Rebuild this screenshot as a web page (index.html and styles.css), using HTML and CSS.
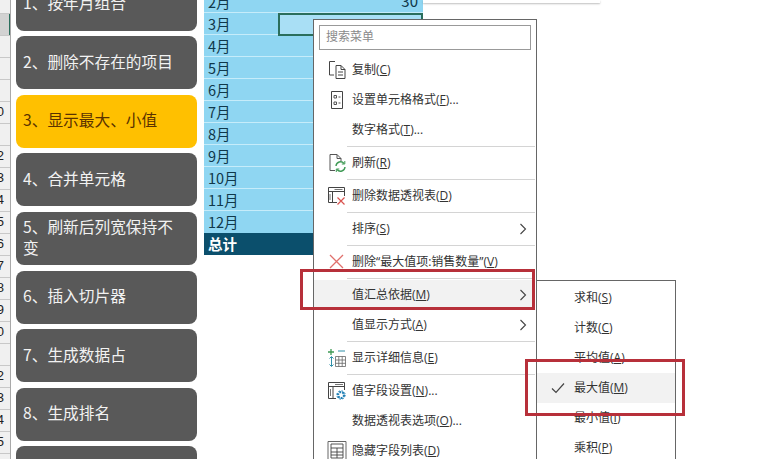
FILE: index.html
```html
<!DOCTYPE html>
<html lang="zh-CN">
<head>
<meta charset="utf-8">
<title>数据透视表</title>
<link rel="stylesheet" href="styles.css">
</head>
<body>
<div class="sheet">
  <div class="rownums">
    <div class="rn"></div>
    <div class="rn rn-selected"></div>
    <div class="rn"></div><div class="rn"></div><div class="rn"></div>
    <div class="rn">0</div><div class="rn"></div><div class="rn">2</div><div class="rn">3</div><div class="rn">4</div><div class="rn">5</div><div class="rn">6</div><div class="rn">7</div><div class="rn">8</div><div class="rn">9</div><div class="rn">0</div><div class="rn"></div><div class="rn">2</div><div class="rn">3</div><div class="rn">4</div><div class="rn">5</div>
  </div>
  <div class="buttons">
    <div class="btn">1、按年月组合</div>
    <div class="btn">2、删除不存在的项目</div>
    <div class="btn btn-active">3、显示最大、小值</div>
    <div class="btn">4、合并单元格</div>
    <div class="btn">5、刷新后列宽保持不变</div>
    <div class="btn">6、插入切片器</div>
    <div class="btn">7、生成数据占</div>
    <div class="btn">8、生成排名</div>
    <div class="btn"></div>
  </div>
  <div class="pivot">
    <div class="pv-row"><span>2月</span><span class="pv-val">30</span></div>
    <div class="pv-row pv-sel-row"><span>3月</span><span class="pv-cell"></span></div>
    <div class="pv-row"><span>4月</span></div>
    <div class="pv-row"><span>5月</span></div>
    <div class="pv-row"><span>6月</span></div>
    <div class="pv-row"><span>7月</span></div>
    <div class="pv-row"><span>8月</span></div>
    <div class="pv-row"><span>9月</span></div>
    <div class="pv-row"><span>10月</span></div>
    <div class="pv-row"><span>11月</span></div>
    <div class="pv-row"><span>12月</span></div>
    <div class="pv-row pv-total"><span>总计</span></div>
  </div>
</div>

<div class="top-panel"></div>

<div class="menu">
  <div class="search">搜索菜单</div>
  <div class="item">
    <svg class="ic" viewBox="0 0 20 20"><path d="M7 15H2.500V1.500H8M9 18.500V5.500h5l4 4v9zM14 5.500v4h4M11 12h5M11 15h5" fill="none" stroke="#444" stroke-width="1"/></svg>
    <span>复制(<u>C</u>)</span>
  </div>
  <div class="item">
    <svg class="ic" viewBox="0 0 20 20"><path d="M4.500 1.500h11v17h-11z" fill="none" stroke="#444"/><path d="M7 5.500h2.500v2.500H7zM7 12h2.500v2.500H7z" fill="none" stroke="#555"/><path d="M11.500 7h2M11.500 13h2" stroke="#555"/></svg>
    <span>设置单元格格式(<u>F</u>)...</span>
  </div>
  <div class="item"><span class="noic">数字格式(<u>T</u>)...</span></div>
  <div class="sep"></div>
  <div class="item">
    <svg class="ic" viewBox="0 0 20 20"><path d="M8 17.500H3V1.500h7l4 4v3M10 1.500v4h4" fill="none" stroke="#555"/><path d="M9 13a4.500 4.500 0 0 1 8-2.500M18 14a4.500 4.500 0 0 1-8 2.500" fill="none" stroke="#3f9a55" stroke-width="1.400"/><path d="M17.800 8v3h-3M9.300 19v-3h3" fill="none" stroke="#3f9a55"/></svg>
    <span>刷新(<u>R</u>)</span>
  </div>
  <div class="sep"></div>
  <div class="item">
    <svg class="ic" viewBox="0 0 20 20"><path d="M10 16.500H1.500v-15h16V10M1.500 5.500h16M5.500 5.500V16.500" fill="none" stroke="#444"/><path d="M7.500 3.500h8M3 8v6" stroke="#777"/><path d="M10.500 11.500l7 7M17.500 11.500l-7 7" stroke="#d9534f" stroke-width="1.200"/></svg>
    <span>删除数据透视表(<u>D</u>)</span>
  </div>
  <div class="sep"></div>
  <div class="item">
    <span class="noic">排序(<u>S</u>)</span>
    <svg class="chev" viewBox="0 0 8 12"><path d="M1.500 1l5 5-5 5" fill="none" stroke="#444" stroke-width="1.100"/></svg>
  </div>
  <div class="sep"></div>
  <div class="item">
    <svg class="ic" viewBox="0 0 20 20"><path d="M3 3l13 13M16 3L3 16" stroke="#e0706c" stroke-width="1.300"/></svg>
    <span>删除“最大值项:销售数量”(<u>V</u>)</span>
  </div>
  <div class="sep"></div>
  <div class="item item-hover">
    <span class="noic">值汇总依据(<u>M</u>)</span>
    <svg class="chev" viewBox="0 0 8 12"><path d="M1.500 1l5 5-5 5" fill="none" stroke="#444" stroke-width="1.100"/></svg>
  </div>
  <div class="item">
    <span class="noic">值显示方式(<u>A</u>)</span>
    <svg class="chev" viewBox="0 0 8 12"><path d="M1.500 1l5 5-5 5" fill="none" stroke="#444" stroke-width="1.100"/></svg>
  </div>
  <div class="sep"></div>
  <div class="item">
    <svg class="ic" viewBox="0 0 20 20"><path d="M1 4h6M4 1v6" stroke="#3f9a55" stroke-width="1.300"/><path d="M11 3h7M4.500 9v9M2.500 16.500l2 2 2-2M2.500 10.500l2-2 2 2" fill="none" stroke="#2f8fa8"/><path d="M8.500 8.500h10v10h-10zM8.500 12h10M8.500 15.300h10M11.800 8.500v10M15.200 8.500v10" fill="none" stroke="#666" stroke-width=".8"/></svg>
    <span>显示详细信息(<u>E</u>)</span>
  </div>
  <div class="sep"></div>
  <div class="item">
    <svg class="ic" viewBox="0 0 20 20"><path d="M9 17.500H1.500v-16h16V9M1.500 5.500h16M6 5.500v12" fill="none" stroke="#444"/><path d="M8 3.500h8M3.500 8v7" stroke="#777"/><circle cx="14" cy="14" r="3" fill="none" stroke="#1f7fb5" stroke-width="2.200" stroke-dasharray="2 1"/><circle cx="14" cy="14" r="4.200" fill="none" stroke="#1f7fb5" stroke-width="1" stroke-dasharray="1.600 1.700"/></svg>
    <span>值字段设置(<u>N</u>)...</span>
  </div>
  <div class="item"><span class="noic">数据透视表选项(<u>O</u>)...</span></div>
  <div class="item">
    <svg class="ic ic-wide" viewBox="0 0 20 20"><path d="M1 .5h18v19H1z" fill="none" stroke="#666"/><path d="M4 3h12v14H4zM4 7h12M4 11h12M4 14h12M10 7v10" fill="none" stroke="#444" stroke-width=".9"/></svg>
    <span>隐藏字段列表(<u>D</u>)</span>
  </div>
</div>

<div class="submenu">
  <div class="item sub-item"><span>求和(<u>S</u>)</span></div>
  <div class="item sub-item"><span>计数(<u>C</u>)</span></div>
  <div class="item sub-item"><span>平均值(<u>A</u>)</span></div>
  <div class="item sub-item item-hover">
    <svg class="check" viewBox="0 0 14 12"><path d="M1 6.500l4 4 8-9" fill="none" stroke="#444" stroke-width="1.200"/></svg>
    <span>最大值(<u>M</u>)</span>
  </div>
  <div class="item sub-item"><span>最小值(<u>I</u>)</span></div>
  <div class="item sub-item"><span>乘积(<u>P</u>)</span></div>
</div>

<div class="mark mark-menu"></div>
<div class="mark mark-sub"></div>
</body>
</html>
```
FILE: styles.css
```css
* { box-sizing: border-box; }
html, body { margin: 0; padding: 0; }
body {
  position: relative;
  width: 760px;
  height: 459px;
  overflow: hidden;
  background: #fff;
  font-family: "Noto Sans CJK SC", "Liberation Sans", sans-serif;
}
.sheet { display: flex; height: 459px; overflow: hidden; }

/* row numbers */
.rownums {
  width: 11px;
  flex: none;
  margin-top: -8px;
  background: #f0f0f0;
  border-right: 1px solid #a9a9a9;
}
.rn {
  height: 22px;
  padding-right: 6px;
  border-bottom: 1px solid #c8c8c8;
  font: 13px/19px "Liberation Sans", sans-serif;
  color: #222;
  display: flex;
  justify-content: flex-end;
  white-space: nowrap;
  overflow: hidden;
}
.rn-selected { background: #d2d2d2; box-shadow: inset -1px 0 0 #2a6e5c; }

/* button column */
.buttons {
  width: 181px;
  flex: none;
  margin: -22.3px 0 0 5px;
  display: flex;
  flex-direction: column;
  gap: 5.57px;
}
.btn {
  flex: none;
  height: 53px;
  padding: 0 15px 3px 7px;
  background: #595959;
  color: #f2f2f2;
  border-radius: 8px;
  font-size: 15.7px;
  line-height: 21px;
  display: flex;
  align-items: center;
}
.btn-active { background: #ffc000; color: #5a3200; }

/* pivot table */
.pivot {
  width: 219px;
  flex: none;
  margin: -9px 0 0 7px;
  align-self: flex-start;
  background: #8fd6f2;
}
.pv-row {
  height: 22px;
  padding-left: 4px;
  border-bottom: 1px solid #c6ecfa;
  color: #10384a;
  font-size: 14.5px;
  line-height: 21px;
  display: flex;
  justify-content: space-between;
  position: relative;
}
.pv-val { padding-right: 5px; font-size: 15px; line-height: 20px; }
.pv-cell {
  position: absolute;
  left: 74px;
  top: 0;
  width: 145px;
  height: 23px;
  border: 2px solid #2a6e5c;
  background: #a9dff5;
}
.pv-total {
  background: #0b4f6c;
  color: #fff;
  font-weight: 700;
  border-bottom: 0;
}
.pv-row:nth-last-child(2) { border-bottom-color: #8fd6f2; }

.top-panel {
  position: absolute;
  left: 423px;
  top: 0;
  width: 177px;
  height: 3px;
  background: #fff;
  box-shadow: 0 1px 2px rgba(0, 0, 0, .25);
}

/* context menu */
.menu {
  position: absolute;
  left: 313px;
  top: 19px;
  width: 224px;
  height: 450px;
  padding: 5px 1px 0 0;
  background: #fff;
  border: 1px solid #666;
  font-family: "Open Sans", "Noto Sans CJK SC", sans-serif;
  font-size: 12px;
  color: #333;
}
.search {
  height: 25px;
  margin: 0 4px 5px 5px;
  padding-left: 6px;
  border: 1px solid #999;
  color: #8a8a8a;
  font-size: 12px;
  line-height: 21px;
}
.item {
  position: relative;
  display: flex;
  align-items: center;
  height: 30px;
  padding: 0 0 2px 38px;
  white-space: nowrap;
}
.item u { text-underline-offset: 1px; }
.item-hover { background: #f2f2f2; }
.ic {
  position: absolute;
  left: 13px;
  top: 5px;
  width: 20px;
  height: 20px;
}
.noic { display: block; }
.chev {
  position: absolute;
  right: 8px;
  top: 9px;
  width: 8px;
  height: 12px;
}
.sep {
  height: 1px;
  margin: 1px 0 1px 33px;
  background: #d4d4d4;
}

/* submenu */
.submenu {
  position: absolute;
  left: 536px;
  top: 280px;
  width: 140px;
  height: 190px;
  padding-top: 2px;
  background: #fff;
  border: 1px solid #666;
  font-family: "Open Sans", "Noto Sans CJK SC", sans-serif;
  font-size: 12px;
  color: #333;
}
.sub-item { padding-left: 37px; }
.check {
  position: absolute;
  left: 14px;
  top: 9px;
  width: 14px;
  height: 12px;
}

/* red annotation boxes */
.mark {
  position: absolute;
  border: 3px solid #b7303a;
}
.mark-menu { left: 300px; top: 269px; width: 235px; height: 41px; }
.mark-sub { left: 525px; top: 359px; width: 160px; height: 57px; }
```
